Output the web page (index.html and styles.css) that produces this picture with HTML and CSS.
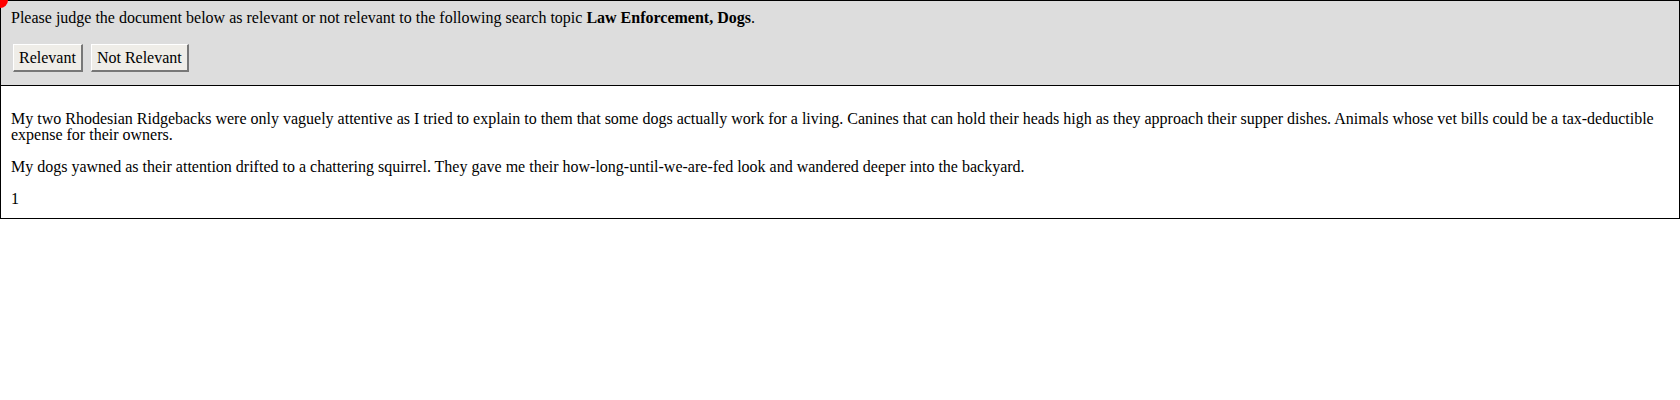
FILE: index.html
```html
<!DOCTYPE html>
<html>
<head>
<meta charset="utf-8">
<link rel="stylesheet" href="styles.css">
</head>
<body>
<div class="dot"></div>
<div class="topic">
  <p class="prompt">Please judge the document below as relevant or not relevant to the following search topic <b>Law Enforcement, Dogs</b>.</p>
  <form class="actions">
    <button type="button" class="btn">Relevant</button>
    <button type="button" class="btn">Not Relevant</button>
  </form>
</div>
<div class="doc">
  <p>My two Rhodesian Ridgebacks were only vaguely attentive as I tried to explain to them that some dogs actually work for a living. Canines that can hold their heads high as they approach their supper dishes. Animals whose vet bills could be a tax-deductible expense for their owners.</p>
  <p>My dogs yawned as their attention drifted to a chattering squirrel. They gave me their how-long-until-we-are-fed look and wandered deeper into the backyard.</p>
  <div class="num">1</div>
</div>
</body>
</html>
```

FILE: styles.css
```css
html, body {
  margin: 0;
  padding: 0;
  background: #ffffff;
}
body {
  font-family: "Liberation Serif", "Times New Roman", serif;
  font-size: 16px;
  line-height: 16px;
  color: #000;
  position: relative;
}
.dot {
  position: absolute;
  left: -8px;
  top: -8px;
  width: 16px;
  height: 16px;
  border-radius: 50%;
  background: #ff0000;
  z-index: 2;
}
.topic {
  background: #dddddd;
  border: 1px solid #000;
  padding: 9px 10px 11px 10px;
}
.prompt {
  margin: 0;
}
.actions {
  margin: 16px 0 0 0;
  display: flex;
  align-items: flex-start;
  gap: 4px;
}
.btn {
  box-sizing: border-box;
  height: 28px;
  margin: 2px;
  font-family: "Liberation Serif", "Times New Roman", serif;
  font-size: 16px;
  line-height: 22px;
  color: #000;
  background: #efede8;
  padding: 1px 5px 1px 5px;
  border-style: solid;
  border-width: 1px 2px 2px 1px;
  border-color: #ffffff #777777 #777777 #ffffff;
  border-radius: 0;
}
.doc {
  border: 1px solid #000;
  border-top: none;
  padding: 9px 10px 11px 10px;
}
.doc p {
  margin: 16px 0;
}
.num {
  margin: 0;
}
```
